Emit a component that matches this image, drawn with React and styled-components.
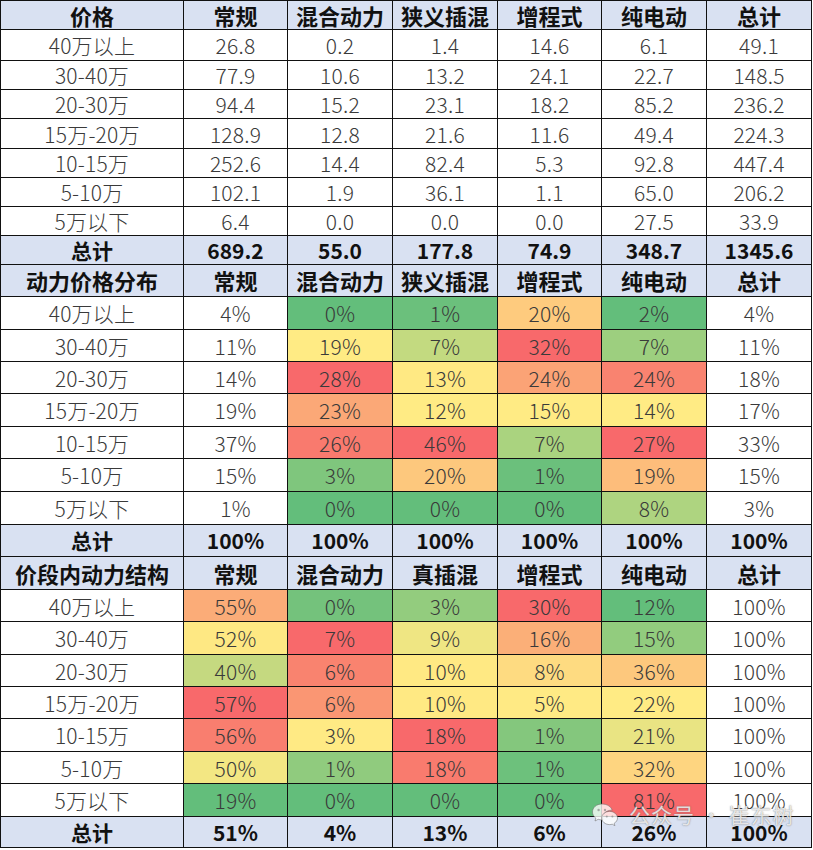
import React from "react";
import styled, { createGlobalStyle } from "styled-components";

const Global = createGlobalStyle`
  html, body { margin: 0; padding: 0; background: #fff; }
  body { font-family: "Noto Sans CJK SC", "Liberation Sans", sans-serif; }
`;

const Wrap = styled.div`
  position: relative;
  width: max-content;
`;

const Sheet = styled.div`
  display: grid;
  grid-template-columns: 182px 103px 104px 104px 103px 104px 104px;
  grid-template-rows:
    28px 30px 28px 28px 29px 28px 28px 28px 28px
    31px 32px 31px 31px 32px 31px 32px 32px 31px
    32px 31px 32px 31px 31px 32px 31px 32px 30px;
  gap: 1px;
  padding: 1px;
  background: #111;
`;

const Cell = styled.div`
  display: flex;
  align-items: center;
  justify-content: center;
  background: ${(p) => p.$bg || "#fff"};
  color: #3a3a3a;
  font-family: "Noto Sans CJK SC", sans-serif;
  font-size: 21px;
  font-weight: 300;
  line-height: 1.2;
  padding-top: 2px;
  white-space: nowrap;
  letter-spacing: 0.2px;
`;

const HeadCell = styled(Cell)`
  background: #d9e1f2;
  color: #111;
  font-size: 22px;
  font-weight: 700;
  padding-top: 0;
  letter-spacing: 0;
`;

const TotalCell = styled(Cell)`
  background: #d9e1f2;
  color: #111;
  font-weight: 700;
  font-size: 21px;
  padding-top: 1px;
  letter-spacing: 0;
`;

const Watermark = styled.div`
  position: absolute;
  left: 591px;
  top: 802px;
  display: flex;
  align-items: center;
  gap: 10px;
  pointer-events: none;
`;

const MarkText = styled.span`
  font-family: "Noto Sans CJK SC", sans-serif;
  font-size: 21px;
  line-height: 1.2;
  font-weight: 400;
  letter-spacing: 1px;
  color: rgba(255, 255, 255, 0.8);
  text-shadow: 0 0 1px rgba(80, 80, 80, 0.6), 0 0 2px rgba(110, 110, 110, 0.4);
`;

const G = "#63BE7B";
const Y = "#FFEB84";
const R = "#F8696B";

const sec1 = {
  head: ["价格", "常规", "混合动力", "狭义插混", "增程式", "纯电动", "总计"],
  rows: [
    ["40万以上", "26.8", "0.2", "1.4", "14.6", "6.1", "49.1"],
    ["30-40万", "77.9", "10.6", "13.2", "24.1", "22.7", "148.5"],
    ["20-30万", "94.4", "15.2", "23.1", "18.2", "85.2", "236.2"],
    ["15万-20万", "128.9", "12.8", "21.6", "11.6", "49.4", "224.3"],
    ["10-15万", "252.6", "14.4", "82.4", "5.3", "92.8", "447.4"],
    ["5-10万", "102.1", "1.9", "36.1", "1.1", "65.0", "206.2"],
    ["5万以下", "6.4", "0.0", "0.0", "0.0", "27.5", "33.9"],
  ],
  total: ["总计", "689.2", "55.0", "177.8", "74.9", "348.7", "1345.6"],
};

const sec2 = {
  head: ["动力价格分布", "常规", "混合动力", "狭义插混", "增程式", "纯电动", "总计"],
  rows: [
    ["40万以上", "4%", ["0%", G], ["1%", "#6BC07C"], ["20%", "#FECB7E"], ["2%", G], "4%"],
    ["30-40万", "11%", ["19%", Y], ["7%", "#C3DA80"], ["32%", R], ["7%", "#9DCF7F"], "11%"],
    ["20-30万", "14%", ["28%", R], ["13%", "#FFE983"], ["24%", "#FBA376"], ["24%", "#F98370"], "18%"],
    ["15万-20万", "19%", ["23%", "#FBA877"], ["12%", Y], ["15%", Y], ["14%", Y], "17%"],
    ["10-15万", "37%", ["26%", "#F97A6E"], ["46%", R], ["7%", "#AAD37F"], ["27%", R], "33%"],
    ["5-10万", "15%", ["3%", "#7FC67D"], ["20%", "#FDC87D"], ["1%", "#6BC07C"], ["19%", "#FDBD7B"], "15%"],
    ["5万以下", "1%", ["0%", G], ["0%", G], ["0%", G], ["8%", "#AED480"], "3%"],
  ],
  total: ["总计", "100%", "100%", "100%", "100%", "100%", "100%"],
};

const sec3 = {
  head: ["价段内动力结构", "常规", "混合动力", "真插混", "增程式", "纯电动", "总计"],
  rows: [
    ["40万以上", ["55%", "#FBAC78"], ["0%", "#74C27C"], ["3%", "#93CC7E"], ["30%", R], ["12%", G], "100%"],
    ["30-40万", ["52%", "#FEE883"], ["7%", R], ["9%", "#EFE683"], ["16%", "#FBAF78"], ["15%", "#92CC7E"], "100%"],
    ["20-30万", ["40%", "#C5D980"], ["6%", "#F9836F"], ["10%", "#FFE983"], ["8%", "#FEDB81"], ["36%", "#FDC87D"], "100%"],
    ["15万-20万", ["57%", R], ["6%", "#FA9673"], ["10%", "#FFE983"], ["5%", "#FFEA84"], ["22%", Y], "100%"],
    ["10-15万", ["56%", "#F97E6F"], ["3%", "#FFEA84"], ["18%", R], ["1%", "#84C77D"], ["21%", "#E9E483"], "100%"],
    ["5-10万", ["50%", "#F3E783"], ["1%", "#90CB7E"], ["18%", "#F97B6E"], ["1%", "#6DC17C"], ["32%", "#FED580"], "100%"],
    ["5万以下", ["19%", G], ["0%", G], ["0%", G], ["0%", G], ["81%", R], "100%"],
  ],
  total: ["总计", "51%", "4%", "13%", "6%", "26%", "100%"],
};

function Section({ data, id }) {
  return (
    <>
      {data.head.map((h, i) => (
        <HeadCell key={`${id}-h-${i}`}>{h}</HeadCell>
      ))}
      {data.rows.map((row, r) =>
        row.map((v, c) =>
          Array.isArray(v) ? (
            <Cell key={`${id}-${r}-${c}`} $bg={v[1]}>
              {v[0]}
            </Cell>
          ) : (
            <Cell key={`${id}-${r}-${c}`}>{v}</Cell>
          )
        )
      )}
      {data.total.map((t, i) => (
        <TotalCell key={`${id}-t-${i}`}>{t}</TotalCell>
      ))}
    </>
  );
}

function WeChatIcon() {
  return (
    <svg width="28" height="26" viewBox="0 0 28 26">
      <g fill="rgba(255,255,255,0.78)" stroke="rgba(110,110,110,0.55)" strokeWidth="1">
        <path d="M11 2C5.5 2 1.5 5.6 1.5 10c0 2.5 1.3 4.6 3.3 6.1L4 19l3.2-1.7c1.2.4 2.4.6 3.8.6.3 0 .6 0 .9 0-.2-.6-.3-1.3-.3-2 0-4.3 4-7.7 8.9-7.7h.6C20.3 4.8 16.1 2 11 2z" />
        <path d="M26.5 16c0-3.7-3.6-6.6-7.9-6.6s-7.9 2.9-7.9 6.6 3.6 6.6 7.9 6.6c.9 0 1.8-.1 2.6-.4l2.7 1.5-.7-2.4c2-1.2 3.3-3.1 3.3-5.3z" />
      </g>
      <g fill="rgba(130,130,130,0.65)">
        <circle cx="7.6" cy="8" r="1.2" />
        <circle cx="14" cy="8" r="1.2" />
        <circle cx="15.8" cy="14.4" r="1" />
        <circle cx="21.4" cy="14.4" r="1" />
      </g>
    </svg>
  );
}

export default function App() {
  return (
    <Wrap>
      <Global />
      <Sheet>
        <Section data={sec1} id="a" />
        <Section data={sec2} id="b" />
        <Section data={sec3} id="c" />
      </Sheet>
      <Watermark>
        <WeChatIcon />
        <MarkText>公众号 · 崔东树</MarkText>
      </Watermark>
    </Wrap>
  );
}
